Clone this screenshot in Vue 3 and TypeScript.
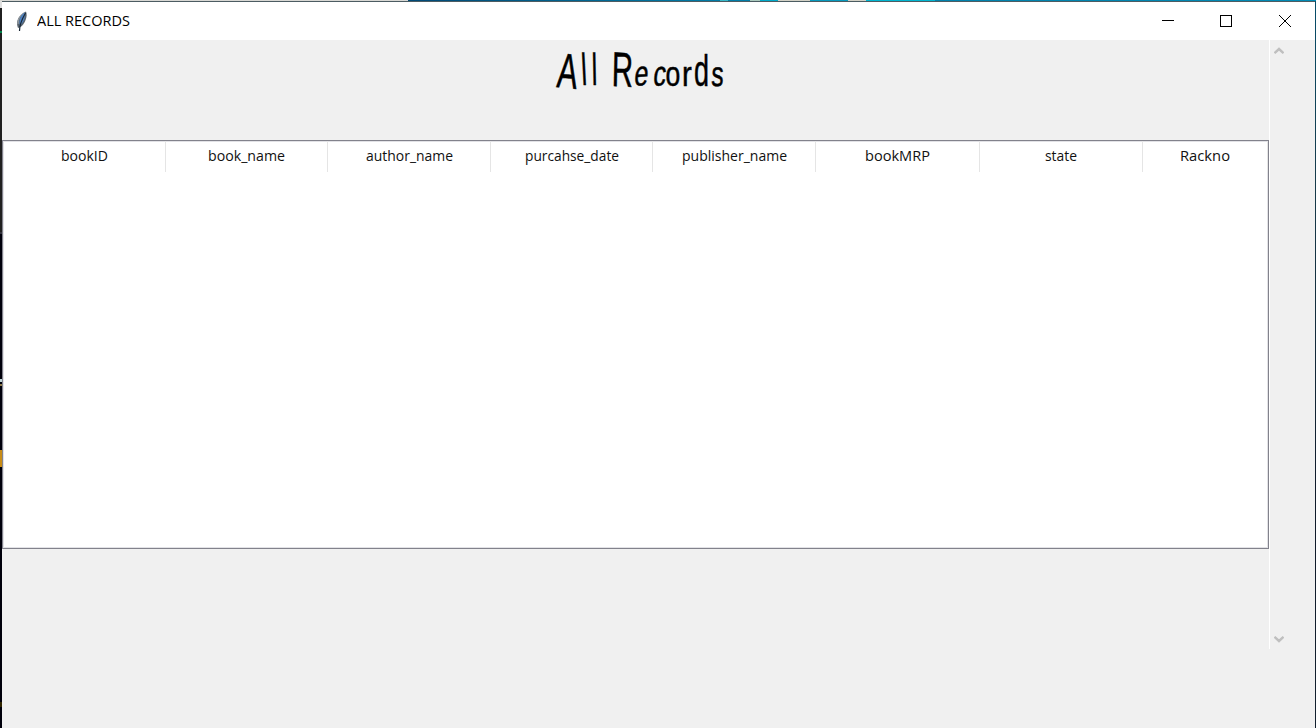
<script setup lang="ts">
interface Column {
  label: string
  width: number
  textWidth: number
}

const columns: Column[] = [
  { label: 'bookID', width: 163, textWidth: 47 },
  { label: 'book_name', width: 162, textWidth: 77 },
  { label: 'author_name', width: 163, textWidth: 87 },
  { label: 'purcahse_date', width: 162, textWidth: 94 },
  { label: 'publisher_name', width: 163, textWidth: 105 },
  { label: 'bookMRP', width: 164, textWidth: 65 },
  { label: 'state', width: 163, textWidth: 32 },
  { label: 'Rackno', width: 125, textWidth: 50 },
]
</script>

<template>
  <div class="desktop">
    <div class="window">
      <header class="titlebar">
        <svg class="feather" width="14" height="22" viewBox="0 0 14 22">
          <path d="M3 18 C.5 12 3 5 11 1.5 C13 6 10 14 5.5 17 Z" fill="#58636d" />
          <path d="M4.5 14 C4 9 6 4 10 2.5 C10.5 8 8.5 12 5.5 15 Z" fill="#4e82c2" />
          <path d="M3 14 C3 9 5 5 8.5 3" fill="none" stroke="#a4aaaf" stroke-width="1" />
          <path d="M4.5 21 C4.5 15 7 9 10.5 3" fill="none" stroke="#182735" stroke-width="1.2" />
        </svg>
        <svg class="caption" width="110" height="24">
          <text x="0" y="17" textLength="93" lengthAdjust="spacingAndGlyphs">ALL RECORDS</text>
        </svg>
        <svg class="controls" width="150" height="38" viewBox="0 0 150 38" fill="none" stroke="#000" stroke-width="1">
          <path d="M12 18.5H24" shape-rendering="crispEdges" />
          <rect x="70.5" y="13.5" width="11" height="11" shape-rendering="crispEdges" />
          <path d="M129 13L141 25M141 13L129 25" />
        </svg>
      </header>
      <div class="body">
        <main class="content">
          <svg class="heading" width="184" height="56" viewBox="0 0 184 56">
            <g class="cap">
              <text transform="matrix(.62 .06 -.1 1 8 47)">A</text>
              <text transform="matrix(.6 .03 -.02 1 63.5 46)">R</text>
            </g>
            <g class="tall">
              <text transform="matrix(.55 0 .05 1 34 45)">l</text>
              <text transform="matrix(.55 0 .02 1 44 45)">l</text>
              <text transform="matrix(.6 0 0 1 146 46)">d</text>
            </g>
            <g class="small">
              <text transform="matrix(.72 -.06 -.1 1 85.5 46)">e</text>
              <text transform="matrix(.72 -.05 -.1 1 104.5 46)">c</text>
              <text transform="matrix(.76 0 0 1 117.5 46)">o</text>
              <text transform="matrix(.84 0 0 1 134 46)">r</text>
              <text transform="matrix(.7 0 -.04 1 163 46)">s</text>
            </g>
          </svg>
          <div class="table">
            <div class="head">
              <div v-for="c in columns" :key="c.label" class="cell" :style="{ width: c.width + 'px' }">
                <svg :width="c.textWidth" height="24">
                  <text x="0" y="17" :textLength="c.textWidth" lengthAdjust="spacingAndGlyphs">{{ c.label }}</text>
                </svg>
              </div>
            </div>
          </div>
        </main>
        <aside class="scrollbar">
          <svg width="10" height="8" viewBox="0 0 10 8"><path d="M.5 6.2L5 2L9.5 6.2" /></svg>
          <svg width="10" height="8" viewBox="0 0 10 8"><path d="M.5 1.8L5 6L9.5 1.8" /></svg>
        </aside>
      </div>
    </div>
  </div>
</template>

<style>
body {
  margin: 0;
  overflow: hidden;
}
</style>

<style scoped>
.desktop {
  box-sizing: border-box;
  width: 1316px;
  height: 728px;
  padding: 1px 1px 0 2px;
  background:
    linear-gradient(#d8d8d4, #d8d8d4) 0 0 / 408px 1px no-repeat,
    linear-gradient(90deg, transparent 720px, #36b8c8 720px 728px, #007da8 728px 750px, #a9c9bd 750px 760px, #00a9c9 760px 778px, #d2d1c6 778px 810px, #0799bd 810px 848px, #d2d1c6 848px 866px, #00b5d0 866px 935px, transparent 935px) 0 0 / 1316px 1px no-repeat,
    linear-gradient(90deg, #004875 408px, #007ca7 720px, #008ab5) 0 0 / 1316px 1px no-repeat,
    linear-gradient(#dedede 8px, #202020 8px 31px, #008248 31px 33px, #202020 33px 232px, #33333d 232px 234px, #00000b 234px 379px, #bdd3d6 379px 382px, #00000b 382px 384px, #8e7a4a 384px 386px, #00000b 386px 450px, #c88c16 450px 467px, #00000b 467px 702px, #302600 702px 707px, #00000b 707px) 0 0 / 2px 728px no-repeat,
    linear-gradient(#064d6a, #173b4b 180px, #101a2a 500px, #13202e);
}
.window {
  display: flex;
  flex-direction: column;
  box-sizing: border-box;
  height: 727px;
  background: #f0f0f0;
  border-top: 1px solid #4c5c62;
}
.titlebar {
  display: flex;
  flex: none;
  height: 38px;
  background: #fff;
}
.feather {
  margin: 8px 0 0 13px;
}
.caption {
  margin: 7px 0 0 8px;
  font: 15px "Open Sans", "Noto Sans", sans-serif;
}
.controls {
  margin-left: auto;
  margin-right: 15px;
}
.body {
  display: flex;
  flex: 1;
}
.content {
  width: 1267px;
}
.heading {
  display: block;
  margin-left: 546px;
  overflow: visible;
  font-family: "Liberation Sans", sans-serif;
  fill: #000;
  stroke: #000;
  stroke-width: .5;
}
.cap {
  font-size: 49px;
}
.small {
  font-size: 35px;
}
.tall {
  font-size: 45px;
}
.table {
  box-sizing: border-box;
  width: 1267px;
  height: 409px;
  margin-top: 44px;
  background: #fff;
  border: 1px solid #82828c;
  box-shadow: inset 0 0 0 1px #e2e2e6;
}
.head {
  display: flex;
  height: 31px;
}
.cell {
  box-sizing: border-box;
  display: flex;
  justify-content: center;
  padding-top: 3px;
  border-right: 1px solid #e5e5e5;
  font: 14.5px "Open Sans", "Noto Sans", sans-serif;
  fill: #111;
}
.cell svg {
  overflow: visible;
}
.scrollbar {
  box-sizing: border-box;
  display: flex;
  flex-direction: column;
  justify-content: space-between;
  height: 609px;
  padding: 7px 0 6px 4px;
  border-left: 1px solid #fff;
}
.scrollbar path {
  fill: none;
  stroke: #bfbfbf;
  stroke-width: 2.4;
}
</style>
